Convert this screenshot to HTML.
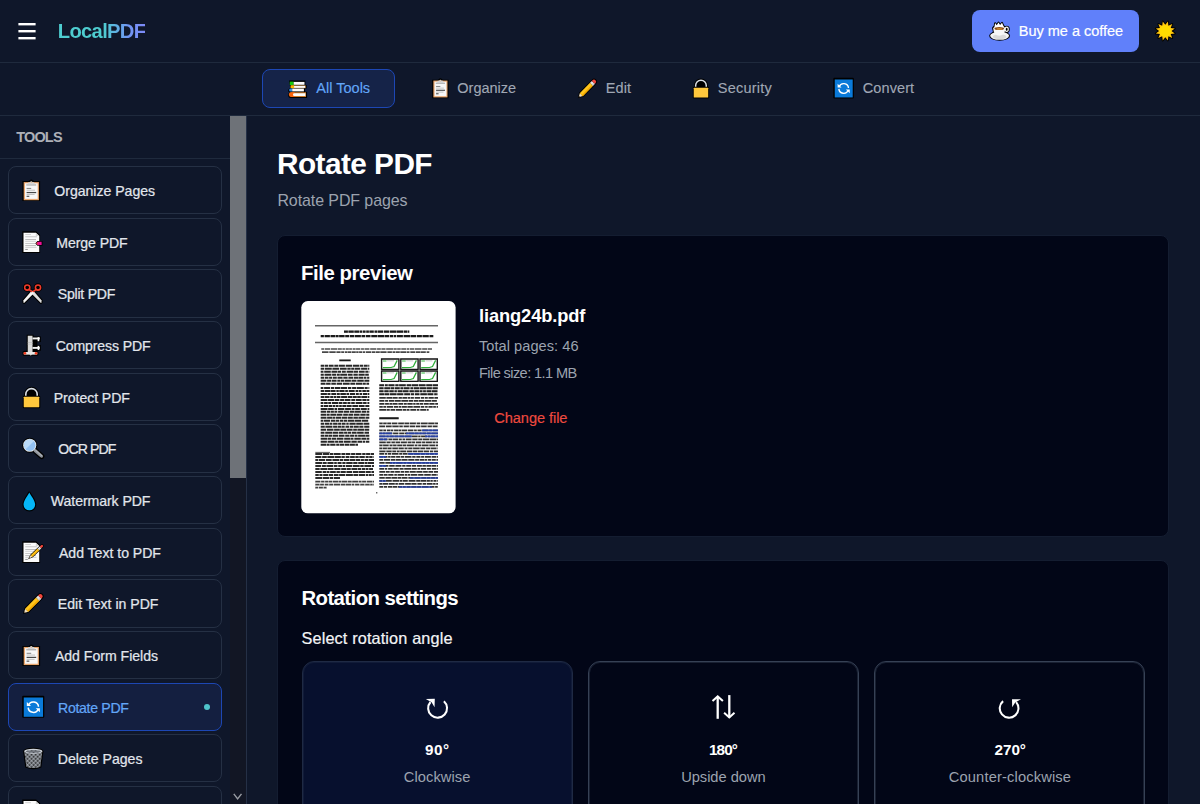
<!DOCTYPE html>
<html lang="en"><head><meta charset="utf-8"><title>LocalPDF - Rotate PDF</title>
<style>
html,body{margin:0;padding:0;}
body{width:1200px;height:804px;overflow:hidden;background:#0f172a;font-family:"Liberation Sans",sans-serif;position:relative;}
#app{position:absolute;left:0;top:0;width:1200px;height:804px;overflow:hidden;background:#0f172a;}
.b{position:absolute;}
.t{position:absolute;white-space:nowrap;font-weight:400;}
svg{position:absolute;left:0;top:0;}
</style></head><body><div id="app">
<div class="b" style="left:0;top:62px;width:1200px;height:1px;background:#1f2a3d"></div>
<div class="b" style="left:0;top:115px;width:1200px;height:1px;background:#1f2a3d"></div>
<div class="b" style="left:972px;top:10px;width:166.5px;height:42.3px;border-radius:8px;background:#6080fa"></div>
<div class="b" style="left:262px;top:69px;width:133px;height:39px;border-radius:8px;background:#152348;border:1px solid #1d47b4;box-sizing:border-box"></div>
<div class="b" style="left:0;top:158px;width:230px;height:1px;background:#1f2a3d"></div>
<div class="b" style="left:7.6px;top:166.00px;width:214.2px;height:48.35px;border-radius:8px;box-sizing:border-box;border:1px solid #253044;"></div>
<div class="b" style="left:7.6px;top:217.65px;width:214.2px;height:48.35px;border-radius:8px;box-sizing:border-box;border:1px solid #253044;"></div>
<div class="b" style="left:7.6px;top:269.30px;width:214.2px;height:48.35px;border-radius:8px;box-sizing:border-box;border:1px solid #253044;"></div>
<div class="b" style="left:7.6px;top:320.95px;width:214.2px;height:48.35px;border-radius:8px;box-sizing:border-box;border:1px solid #253044;"></div>
<div class="b" style="left:7.6px;top:372.60px;width:214.2px;height:48.35px;border-radius:8px;box-sizing:border-box;border:1px solid #253044;"></div>
<div class="b" style="left:7.6px;top:424.25px;width:214.2px;height:48.35px;border-radius:8px;box-sizing:border-box;border:1px solid #253044;"></div>
<div class="b" style="left:7.6px;top:475.90px;width:214.2px;height:48.35px;border-radius:8px;box-sizing:border-box;border:1px solid #253044;"></div>
<div class="b" style="left:7.6px;top:527.55px;width:214.2px;height:48.35px;border-radius:8px;box-sizing:border-box;border:1px solid #253044;"></div>
<div class="b" style="left:7.6px;top:579.20px;width:214.2px;height:48.35px;border-radius:8px;box-sizing:border-box;border:1px solid #253044;"></div>
<div class="b" style="left:7.6px;top:630.85px;width:214.2px;height:48.35px;border-radius:8px;box-sizing:border-box;border:1px solid #253044;"></div>
<div class="b" style="left:7.6px;top:682.50px;width:214.2px;height:48.35px;border-radius:8px;box-sizing:border-box;background:#141f40;border:1px solid #1d47b4;"></div>
<div class="b" style="left:7.6px;top:734.15px;width:214.2px;height:48.35px;border-radius:8px;box-sizing:border-box;border:1px solid #253044;"></div>
<div class="b" style="left:7.6px;top:785.80px;width:214.2px;height:48.35px;border-radius:8px;box-sizing:border-box;border:1px solid #253044;"></div>
<div class="b" style="left:203.8px;top:703.8px;width:6.2px;height:6.2px;border-radius:50%;background:#4fc3cb"></div>
<div class="b" style="left:230px;top:116px;width:16px;height:688px;background:#121624"></div>
<div class="b" style="left:230px;top:116px;width:16px;height:362px;background:#6e7278"></div>
<div class="b" style="left:246px;top:116px;width:1px;height:688px;background:#253046"></div>
<div class="b" style="left:277px;top:235px;width:892px;height:302px;border-radius:8px;background:#020617;border:1px solid #141d31;box-sizing:border-box"></div>
<div class="b" style="left:277px;top:560px;width:892px;height:300px;border-radius:8px;background:#020617;border:1px solid #141d31;box-sizing:border-box"></div>
<div class="b" style="left:301.5px;top:661px;width:271px;height:200px;border-radius:12px;background:#07102e;border:1px solid #1f2a44;box-shadow:inset 0 0 0 1px rgba(31,42,68,0.45);box-sizing:border-box"></div>
<div class="b" style="left:588px;top:661px;width:271px;height:200px;border-radius:12px;background:#020617;border:1px solid #364155;box-shadow:inset 0 0 0 1px rgba(54,65,85,0.45);box-sizing:border-box"></div>
<div class="b" style="left:874.3px;top:661px;width:271px;height:200px;border-radius:12px;background:#020617;border:1px solid #364155;box-shadow:inset 0 0 0 1px rgba(54,65,85,0.45);box-sizing:border-box"></div>
<svg width="1200" height="804" viewBox="0 0 1200 804">
<defs><filter id="bl" x="-5%" y="-5%" width="110%" height="110%"><feGaussianBlur stdDeviation="0.35"/></filter></defs>
<rect x="301.3" y="301" width="154.3" height="212.3" rx="6.5" fill="#fff"/>
<g filter="url(#bl)">
<path d="M315,325h123v1.5h-123zM315,341.7h123v1.5h-123z" fill="#666"/>
<path d="M315.3,451.9h14.7v0.8h-14.7z" fill="#333"/>
<path d="M344.0,330.50h3.9v2.2h-3.9zM348.4,330.50h5.4v2.2h-5.4zM354.3,330.50h4.9v2.2h-4.9zM359.7,330.50h2.7v2.2h-2.7zM363.0,330.50h2.6v2.2h-2.6zM366.2,330.50h2.7v2.2h-2.7zM369.4,330.50h4.4v2.2h-4.4zM374.5,330.50h3.0v2.2h-3.0zM378.0,330.50h5.3v2.2h-5.3zM384.0,330.50h5.1v2.2h-5.1zM389.7,330.50h6.9v2.2h-6.9zM397.0,330.50h6.3v2.2h-6.3zM403.9,330.50h3.1v2.2h-3.1zM407.5,330.50h1.8v2.2h-1.8zM320.7,335.00h3.2v2.2h-3.2zM324.6,335.00h5.3v2.2h-5.3zM330.5,335.00h4.9v2.2h-4.9zM335.9,335.00h2.7v2.2h-2.7zM339.1,335.00h5.5v2.2h-5.5zM345.2,335.00h3.8v2.2h-3.8zM349.7,335.00h4.5v2.2h-4.5zM354.8,335.00h6.1v2.2h-6.1zM361.5,335.00h3.5v2.2h-3.5zM365.7,335.00h4.8v2.2h-4.8zM371.3,335.00h5.8v2.2h-5.8zM377.6,335.00h6.9v2.2h-6.9zM385.0,335.00h4.3v2.2h-4.3zM390.0,335.00h3.1v2.2h-3.1zM393.7,335.00h2.6v2.2h-2.6zM397.0,335.00h5.9v2.2h-5.9zM403.6,335.00h6.4v2.2h-6.4zM410.5,335.00h5.6v2.2h-5.6zM416.8,335.00h5.1v2.2h-5.1zM422.5,335.00h6.3v2.2h-6.3zM429.5,335.00h3.8v2.2h-3.8zM339.3,359.45h11.4v1.9h-11.4zM379.3,417.30h19.4v2.0h-19.4z" fill="#0a0a0a" opacity="0.95"/>
<path d="M321.3,348.15h2.7v1.7h-2.7zM324.7,348.15h5.4v1.7h-5.4zM330.8,348.15h6.2v1.7h-6.2zM337.6,348.15h4.2v1.7h-4.2zM342.4,348.15h2.5v1.7h-2.5zM345.6,348.15h3.2v1.7h-3.2zM349.2,348.15h2.7v1.7h-2.7zM352.6,348.15h3.0v1.7h-3.0zM356.1,348.15h4.2v1.7h-4.2zM361.1,348.15h2.8v1.7h-2.8zM364.5,348.15h4.9v1.7h-4.9zM370.2,348.15h6.2v1.7h-6.2zM377.1,348.15h3.7v1.7h-3.7zM381.4,348.15h4.1v1.7h-4.1zM386.2,348.15h6.8v1.7h-6.8zM393.5,348.15h3.2v1.7h-3.2zM397.2,348.15h3.5v1.7h-3.5zM401.3,348.15h5.1v1.7h-5.1zM407.0,348.15h2.4v1.7h-2.4zM410.0,348.15h4.1v1.7h-4.1zM414.7,348.15h6.8v1.7h-6.8zM422.2,348.15h4.8v1.7h-4.8zM427.6,348.15h4.4v1.7h-4.4zM322.0,351.25h6.5v1.7h-6.5zM329.3,351.25h6.4v1.7h-6.4zM336.4,351.25h4.2v1.7h-4.2zM341.2,351.25h2.9v1.7h-2.9zM344.8,351.25h2.7v1.7h-2.7zM347.9,351.25h3.4v1.7h-3.4zM351.8,351.25h4.0v1.7h-4.0zM356.2,351.25h2.4v1.7h-2.4zM359.1,351.25h2.9v1.7h-2.9zM362.6,351.25h2.5v1.7h-2.5zM365.8,351.25h5.2v1.7h-5.2zM371.6,351.25h3.6v1.7h-3.6zM375.7,351.25h4.1v1.7h-4.1zM380.3,351.25h6.3v1.7h-6.3zM387.4,351.25h4.5v1.7h-4.5zM392.5,351.25h2.8v1.7h-2.8zM395.8,351.25h4.0v1.7h-4.0zM400.3,351.25h6.2v1.7h-6.2zM407.0,351.25h2.5v1.7h-2.5zM410.3,351.25h4.8v1.7h-4.8zM415.7,351.25h4.9v1.7h-4.9zM421.0,351.25h4.8v1.7h-4.8zM426.6,351.25h2.7v1.7h-2.7z" fill="#1c1c1c" opacity="0.8"/>
<path d="M320.7,364.75h3.6v1.9h-3.6zM324.9,364.75h3.2v1.9h-3.2zM328.8,364.75h4.8v1.9h-4.8zM334.3,364.75h3.9v1.9h-3.9zM338.8,364.75h6.1v1.9h-6.1zM345.7,364.75h6.3v1.9h-6.3zM352.8,364.75h6.2v1.9h-6.2zM359.6,364.75h3.4v1.9h-3.4zM363.7,364.75h4.0v1.9h-4.0zM368.2,364.75h1.1v1.9h-1.1zM320.7,367.75h3.6v1.9h-3.6zM325.0,367.75h6.8v1.9h-6.8zM332.4,367.75h6.7v1.9h-6.7zM339.9,367.75h6.8v1.9h-6.8zM347.3,367.75h3.4v1.9h-3.4zM351.2,367.75h3.3v1.9h-3.3zM355.0,367.75h5.3v1.9h-5.3zM361.1,367.75h6.3v1.9h-6.3zM368.0,367.75h1.3v1.9h-1.3zM320.7,370.75h2.8v1.9h-2.8zM324.2,370.75h6.6v1.9h-6.6zM331.5,370.75h5.9v1.9h-5.9zM337.9,370.75h3.2v1.9h-3.2zM341.9,370.75h3.9v1.9h-3.9zM346.6,370.75h6.9v1.9h-6.9zM354.0,370.75h4.2v1.9h-4.2zM359.0,370.75h5.7v1.9h-5.7zM365.3,370.75h3.0v1.9h-3.0zM368.8,370.75h0.5v1.9h-0.5zM320.7,373.75h3.1v1.9h-3.1zM324.5,373.75h6.9v1.9h-6.9zM332.1,373.75h4.0v1.9h-4.0zM336.8,373.75h3.0v1.9h-3.0zM340.2,373.75h6.9v1.9h-6.9zM347.8,373.75h4.8v1.9h-4.8zM353.4,373.75h4.4v1.9h-4.4zM358.5,373.75h6.2v1.9h-6.2zM365.2,373.75h3.6v1.9h-3.6zM320.7,376.75h3.5v1.9h-3.5zM324.9,376.75h3.6v1.9h-3.6zM329.1,376.75h3.0v1.9h-3.0zM332.8,376.75h4.0v1.9h-4.0zM337.5,376.75h5.1v1.9h-5.1zM343.3,376.75h4.3v1.9h-4.3zM348.4,376.75h4.7v1.9h-4.7zM353.8,376.75h4.8v1.9h-4.8zM359.0,376.75h4.4v1.9h-4.4zM364.0,376.75h2.4v1.9h-2.4zM367.1,376.75h2.2v1.9h-2.2zM320.7,379.75h5.7v1.9h-5.7zM327.1,379.75h3.9v1.9h-3.9zM331.6,379.75h5.0v1.9h-5.0zM337.3,379.75h2.9v1.9h-2.9zM340.8,379.75h3.5v1.9h-3.5zM344.9,379.75h6.0v1.9h-6.0zM351.5,379.75h5.0v1.9h-5.0zM357.2,379.75h6.6v1.9h-6.6zM364.4,379.75h4.9v1.9h-4.9zM320.7,382.75h4.8v1.9h-4.8zM326.1,382.75h4.5v1.9h-4.5zM331.3,382.75h4.6v1.9h-4.6zM336.6,382.75h5.6v1.9h-5.6zM343.0,382.75h6.7v1.9h-6.7zM350.3,382.75h5.0v1.9h-5.0zM356.0,382.75h6.3v1.9h-6.3zM362.8,382.75h3.0v1.9h-3.0zM366.4,382.75h2.7v1.9h-2.7zM320.7,387.05h2.7v1.9h-2.7zM324.1,387.05h6.0v1.9h-6.0zM330.9,387.05h3.1v1.9h-3.1zM334.7,387.05h5.4v1.9h-5.4zM340.6,387.05h6.5v1.9h-6.5zM347.9,387.05h3.4v1.9h-3.4zM352.1,387.05h4.2v1.9h-4.2zM356.9,387.05h7.0v1.9h-7.0zM364.6,387.05h3.1v1.9h-3.1zM368.4,387.05h0.9v1.9h-0.9zM320.7,390.05h3.3v1.9h-3.3zM324.6,390.05h5.7v1.9h-5.7zM330.7,390.05h4.9v1.9h-4.9zM336.3,390.05h2.5v1.9h-2.5zM339.3,390.05h5.3v1.9h-5.3zM345.2,390.05h2.7v1.9h-2.7zM348.7,390.05h6.0v1.9h-6.0zM355.5,390.05h2.9v1.9h-2.9zM359.0,390.05h2.6v1.9h-2.6zM362.3,390.05h3.6v1.9h-3.6zM366.4,390.05h2.9v1.9h-2.9zM320.7,393.05h6.2v1.9h-6.2zM327.4,393.05h3.1v1.9h-3.1zM331.3,393.05h5.0v1.9h-5.0zM337.0,393.05h2.8v1.9h-2.8zM340.3,393.05h5.6v1.9h-5.6zM346.4,393.05h2.7v1.9h-2.7zM349.9,393.05h5.3v1.9h-5.3zM356.0,393.05h2.8v1.9h-2.8zM359.5,393.05h2.7v1.9h-2.7zM363.0,393.05h4.5v1.9h-4.5zM368.0,393.05h1.3v1.9h-1.3zM320.7,396.05h3.6v1.9h-3.6zM324.8,396.05h4.8v1.9h-4.8zM330.2,396.05h2.9v1.9h-2.9zM333.6,396.05h2.6v1.9h-2.6zM336.7,396.05h3.8v1.9h-3.8zM341.1,396.05h5.9v1.9h-5.9zM347.6,396.05h4.7v1.9h-4.7zM352.8,396.05h4.0v1.9h-4.0zM357.2,396.05h3.6v1.9h-3.6zM361.3,396.05h5.8v1.9h-5.8zM367.7,396.05h1.6v1.9h-1.6zM320.7,399.05h6.7v1.9h-6.7zM327.9,399.05h6.2v1.9h-6.2zM334.7,399.05h4.7v1.9h-4.7zM340.1,399.05h4.2v1.9h-4.2zM344.9,399.05h5.6v1.9h-5.6zM351.3,399.05h4.0v1.9h-4.0zM356.0,399.05h5.7v1.9h-5.7zM362.3,399.05h4.3v1.9h-4.3zM367.1,399.05h2.2v1.9h-2.2zM320.7,402.05h2.7v1.9h-2.7zM324.1,402.05h3.6v1.9h-3.6zM328.2,402.05h2.8v1.9h-2.8zM331.8,402.05h6.4v1.9h-6.4zM338.8,402.05h3.7v1.9h-3.7zM343.1,402.05h3.7v1.9h-3.7zM347.4,402.05h3.1v1.9h-3.1zM351.2,402.05h3.6v1.9h-3.6zM355.6,402.05h6.9v1.9h-6.9zM363.1,402.05h3.5v1.9h-3.5zM367.4,402.05h1.9v1.9h-1.9zM320.7,405.05h2.4v1.9h-2.4zM323.7,405.05h4.6v1.9h-4.6zM328.9,405.05h3.3v1.9h-3.3zM332.8,405.05h2.4v1.9h-2.4zM335.8,405.05h2.8v1.9h-2.8zM339.2,405.05h2.6v1.9h-2.6zM342.3,405.05h3.8v1.9h-3.8zM346.6,405.05h5.1v1.9h-5.1zM352.3,405.05h5.9v1.9h-5.9zM358.9,405.05h5.7v1.9h-5.7zM365.3,405.05h4.0v1.9h-4.0zM320.7,408.05h6.9v1.9h-6.9zM328.1,408.05h5.7v1.9h-5.7zM334.5,408.05h2.6v1.9h-2.6zM337.9,408.05h6.5v1.9h-6.5zM345.1,408.05h5.8v1.9h-5.8zM351.6,408.05h3.0v1.9h-3.0zM355.2,408.05h4.7v1.9h-4.7zM360.7,408.05h6.1v1.9h-6.1zM367.5,408.05h1.8v1.9h-1.8zM320.7,410.75h5.5v1.9h-5.5zM326.9,410.75h3.5v1.9h-3.5zM330.9,410.75h3.0v1.9h-3.0zM334.4,410.75h2.9v1.9h-2.9zM338.1,410.75h5.0v1.9h-5.0zM343.7,410.75h5.3v1.9h-5.3zM349.7,410.75h4.7v1.9h-4.7zM354.8,410.75h6.1v1.9h-6.1zM361.6,410.75h4.7v1.9h-4.7zM366.9,410.75h2.4v1.9h-2.4zM320.7,413.75h5.8v1.9h-5.8zM327.0,413.75h2.7v1.9h-2.7zM330.3,413.75h5.8v1.9h-5.8zM336.6,413.75h5.8v1.9h-5.8zM343.2,413.75h4.7v1.9h-4.7zM348.4,413.75h4.6v1.9h-4.6zM353.7,413.75h5.9v1.9h-5.9zM360.3,413.75h5.4v1.9h-5.4zM366.2,413.75h3.1v1.9h-3.1zM320.7,416.75h5.8v1.9h-5.8zM327.1,416.75h5.0v1.9h-5.0zM332.5,416.75h2.7v1.9h-2.7zM335.8,416.75h5.5v1.9h-5.5zM341.9,416.75h5.5v1.9h-5.5zM348.0,416.75h4.8v1.9h-4.8zM353.4,416.75h4.5v1.9h-4.5zM358.4,416.75h6.5v1.9h-6.5zM365.5,416.75h3.8v1.9h-3.8zM320.7,419.75h2.5v1.9h-2.5zM323.8,419.75h6.2v1.9h-6.2zM330.8,419.75h4.5v1.9h-4.5zM335.8,419.75h3.4v1.9h-3.4zM339.9,419.75h3.4v1.9h-3.4zM343.9,419.75h3.1v1.9h-3.1zM347.6,419.75h6.8v1.9h-6.8zM354.9,419.75h6.2v1.9h-6.2zM361.7,419.75h6.5v1.9h-6.5zM320.7,422.75h3.5v1.9h-3.5zM324.9,422.75h4.6v1.9h-4.6zM330.0,422.75h2.4v1.9h-2.4zM333.1,422.75h4.5v1.9h-4.5zM338.1,422.75h3.0v1.9h-3.0zM341.7,422.75h3.9v1.9h-3.9zM346.3,422.75h2.4v1.9h-2.4zM349.4,422.75h6.3v1.9h-6.3zM356.2,422.75h6.7v1.9h-6.7zM363.5,422.75h5.8v1.9h-5.8zM320.7,425.75h4.1v1.9h-4.1zM325.4,425.75h7.0v1.9h-7.0zM333.1,425.75h4.1v1.9h-4.1zM337.7,425.75h3.7v1.9h-3.7zM341.8,425.75h2.9v1.9h-2.9zM345.5,425.75h3.7v1.9h-3.7zM349.9,425.75h3.5v1.9h-3.5zM354.0,425.75h4.8v1.9h-4.8zM359.3,425.75h4.1v1.9h-4.1zM364.2,425.75h5.1v1.9h-5.1zM320.7,428.75h5.3v1.9h-5.3zM326.8,428.75h6.7v1.9h-6.7zM334.1,428.75h5.7v1.9h-5.7zM340.3,428.75h5.8v1.9h-5.8zM346.7,428.75h5.9v1.9h-5.9zM353.2,428.75h3.7v1.9h-3.7zM357.4,428.75h6.7v1.9h-6.7zM364.6,428.75h4.6v1.9h-4.6zM320.7,431.75h3.8v1.9h-3.8zM325.2,431.75h6.9v1.9h-6.9zM332.6,431.75h5.4v1.9h-5.4zM338.6,431.75h5.0v1.9h-5.0zM344.1,431.75h3.2v1.9h-3.2zM347.8,431.75h3.4v1.9h-3.4zM351.9,431.75h4.7v1.9h-4.7zM357.1,431.75h6.6v1.9h-6.6zM364.5,431.75h4.5v1.9h-4.5zM320.7,434.75h3.3v1.9h-3.3zM324.5,434.75h4.0v1.9h-4.0zM328.9,434.75h3.5v1.9h-3.5zM333.0,434.75h5.0v1.9h-5.0zM338.7,434.75h5.8v1.9h-5.8zM345.2,434.75h4.3v1.9h-4.3zM350.1,434.75h4.1v1.9h-4.1zM354.8,434.75h2.7v1.9h-2.7zM358.1,434.75h6.9v1.9h-6.9zM365.4,434.75h3.9v1.9h-3.9zM320.7,437.75h6.4v1.9h-6.4zM327.6,437.75h3.6v1.9h-3.6zM331.8,437.75h4.2v1.9h-4.2zM336.6,437.75h6.8v1.9h-6.8zM344.2,437.75h6.4v1.9h-6.4zM351.0,437.75h2.5v1.9h-2.5zM354.3,437.75h6.5v1.9h-6.5zM361.4,437.75h5.1v1.9h-5.1zM367.0,437.75h2.3v1.9h-2.3zM320.7,440.75h6.2v1.9h-6.2zM327.6,440.75h6.9v1.9h-6.9zM335.1,440.75h2.9v1.9h-2.9zM338.5,440.75h4.8v1.9h-4.8zM344.0,440.75h6.7v1.9h-6.7zM351.4,440.75h5.4v1.9h-5.4zM357.5,440.75h4.5v1.9h-4.5zM362.6,440.75h2.6v1.9h-2.6zM365.9,440.75h3.4v1.9h-3.4zM320.7,443.75h5.4v1.9h-5.4zM326.6,443.75h3.0v1.9h-3.0zM330.2,443.75h5.3v1.9h-5.3zM336.2,443.75h2.9v1.9h-2.9zM339.6,443.75h4.8v1.9h-4.8zM345.0,443.75h4.2v1.9h-4.2zM349.7,443.75h5.2v1.9h-5.2zM355.4,443.75h2.6v1.9h-2.6z" fill="#111" opacity="0.9"/>
<path d="M315.3,453.00h6.8v2.0h-6.8zM322.8,453.00h6.5v2.0h-6.5zM329.9,453.00h3.5v2.0h-3.5zM333.9,453.00h6.8v2.0h-6.8zM341.4,453.00h3.8v2.0h-3.8zM345.7,453.00h4.7v2.0h-4.7zM351.1,453.00h4.3v2.0h-4.3zM355.9,453.00h5.5v2.0h-5.5zM362.2,453.00h3.4v2.0h-3.4zM366.1,453.00h4.0v2.0h-4.0zM370.6,453.00h3.4v2.0h-3.4zM315.3,456.00h6.1v2.0h-6.1zM322.1,456.00h4.7v2.0h-4.7zM327.3,456.00h6.9v2.0h-6.9zM334.7,456.00h6.2v2.0h-6.2zM341.4,456.00h3.4v2.0h-3.4zM345.6,456.00h3.8v2.0h-3.8zM350.1,456.00h4.7v2.0h-4.7zM355.3,456.00h3.4v2.0h-3.4zM359.3,456.00h5.5v2.0h-5.5zM365.6,456.00h3.1v2.0h-3.1zM369.2,456.00h3.4v2.0h-3.4zM373.4,456.00h0.6v2.0h-0.6zM315.3,459.00h2.7v2.0h-2.7zM318.6,459.00h6.5v2.0h-6.5zM325.9,459.00h5.8v2.0h-5.8zM332.4,459.00h6.7v2.0h-6.7zM339.7,459.00h3.3v2.0h-3.3zM343.7,459.00h5.8v2.0h-5.8zM350.0,459.00h5.5v2.0h-5.5zM356.0,459.00h4.1v2.0h-4.1zM360.7,459.00h3.2v2.0h-3.2zM364.4,459.00h3.7v2.0h-3.7zM368.6,459.00h5.4v2.0h-5.4zM315.3,462.00h6.8v2.0h-6.8zM322.7,462.00h4.0v2.0h-4.0zM327.4,462.00h6.2v2.0h-6.2zM334.2,462.00h2.6v2.0h-2.6zM337.5,462.00h4.1v2.0h-4.1zM342.3,462.00h3.3v2.0h-3.3zM346.2,462.00h6.5v2.0h-6.5zM353.2,462.00h4.3v2.0h-4.3zM358.2,462.00h5.9v2.0h-5.9zM364.6,462.00h2.6v2.0h-2.6zM367.6,462.00h6.4v2.0h-6.4zM315.3,465.00h5.8v2.0h-5.8zM321.9,465.00h4.0v2.0h-4.0zM326.4,465.00h6.8v2.0h-6.8zM333.9,465.00h3.6v2.0h-3.6zM338.2,465.00h3.9v2.0h-3.9zM342.6,465.00h2.4v2.0h-2.4zM345.7,465.00h6.6v2.0h-6.6zM353.0,465.00h6.7v2.0h-6.7zM360.2,465.00h3.5v2.0h-3.5zM364.3,465.00h6.8v2.0h-6.8zM371.9,465.00h2.1v2.0h-2.1zM315.3,468.00h4.4v2.0h-4.4zM320.3,468.00h6.7v2.0h-6.7zM327.5,468.00h6.1v2.0h-6.1zM334.3,468.00h6.2v2.0h-6.2zM341.2,468.00h5.2v2.0h-5.2zM346.9,468.00h3.9v2.0h-3.9zM351.4,468.00h6.0v2.0h-6.0zM357.9,468.00h3.3v2.0h-3.3zM361.9,468.00h3.5v2.0h-3.5zM365.9,468.00h2.6v2.0h-2.6zM369.1,468.00h3.9v2.0h-3.9zM315.3,471.00h6.5v2.0h-6.5zM322.6,471.00h3.6v2.0h-3.6zM326.7,471.00h2.8v2.0h-2.8zM330.1,471.00h5.7v2.0h-5.7zM336.4,471.00h3.5v2.0h-3.5zM340.5,471.00h5.3v2.0h-5.3zM346.4,471.00h5.8v2.0h-5.8zM353.0,471.00h5.5v2.0h-5.5zM358.9,471.00h6.3v2.0h-6.3zM365.8,471.00h5.0v2.0h-5.0zM371.4,471.00h2.6v2.0h-2.6zM315.3,474.00h3.5v2.0h-3.5zM319.4,474.00h3.1v2.0h-3.1zM323.2,474.00h5.1v2.0h-5.1zM328.9,474.00h4.2v2.0h-4.2zM333.9,474.00h4.7v2.0h-4.7zM339.1,474.00h6.1v2.0h-6.1zM345.9,474.00h7.0v2.0h-7.0zM353.4,474.00h4.6v2.0h-4.6zM358.7,474.00h6.3v2.0h-6.3zM365.7,474.00h2.6v2.0h-2.6zM368.9,474.00h2.9v2.0h-2.9zM372.3,474.00h1.7v2.0h-1.7zM315.3,477.00h6.7v2.0h-6.7zM322.6,477.00h6.4v2.0h-6.4zM329.6,477.00h3.6v2.0h-3.6zM333.9,477.00h6.1v2.0h-6.1z" fill="#111" opacity="0.88"/>
<path d="M315.3,480.70h5.1v1.8h-5.1zM321.1,480.70h3.4v1.8h-3.4zM325.1,480.70h3.1v1.8h-3.1zM328.7,480.70h3.6v1.8h-3.6zM332.9,480.70h5.4v1.8h-5.4zM338.8,480.70h2.5v1.8h-2.5zM341.8,480.70h5.5v1.8h-5.5zM347.9,480.70h3.8v1.8h-3.8zM352.2,480.70h6.1v1.8h-6.1zM358.9,480.70h2.7v1.8h-2.7zM362.1,480.70h4.2v1.8h-4.2zM367.0,480.70h5.3v1.8h-5.3zM372.8,480.70h1.2v1.8h-1.2zM315.3,483.70h4.3v1.8h-4.3zM320.1,483.70h3.8v1.8h-3.8zM324.7,483.70h3.8v1.8h-3.8zM329.2,483.70h4.0v1.8h-4.0zM333.9,483.70h6.4v1.8h-6.4zM341.0,483.70h4.1v1.8h-4.1zM345.6,483.70h5.7v1.8h-5.7zM351.9,483.70h2.4v1.8h-2.4zM355.1,483.70h4.3v1.8h-4.3zM360.2,483.70h4.3v1.8h-4.3zM365.2,483.70h4.5v1.8h-4.5zM370.2,483.70h2.5v1.8h-2.5zM373.3,483.70h0.7v1.8h-0.7zM315.3,486.70h2.8v1.8h-2.8zM318.8,486.70h4.1v1.8h-4.1zM323.5,486.70h3.1v1.8h-3.1z" fill="#111" opacity="0.8"/>
<path d="M379.3,384.35h4.8v1.9h-4.8zM384.9,384.35h2.9v1.9h-2.9zM388.4,384.35h6.1v1.9h-6.1zM395.3,384.35h3.3v1.9h-3.3zM399.1,384.35h6.7v1.9h-6.7zM406.6,384.35h4.6v1.9h-4.6zM411.7,384.35h6.7v1.9h-6.7zM419.0,384.35h6.6v1.9h-6.6zM426.2,384.35h6.2v1.9h-6.2zM432.9,384.35h5.1v1.9h-5.1zM379.3,387.35h4.3v1.9h-4.3zM384.3,387.35h6.2v1.9h-6.2zM391.0,387.35h3.4v1.9h-3.4zM395.0,387.35h4.8v1.9h-4.8zM400.4,387.35h3.0v1.9h-3.0zM403.9,387.35h5.7v1.9h-5.7zM410.4,387.35h2.6v1.9h-2.6zM413.6,387.35h5.9v1.9h-5.9zM420.0,387.35h6.3v1.9h-6.3zM426.7,387.35h5.2v1.9h-5.2zM432.5,387.35h5.3v1.9h-5.3zM379.3,390.35h4.3v1.9h-4.3zM384.3,390.35h4.4v1.9h-4.4zM389.3,390.35h4.5v1.9h-4.5zM394.4,390.35h2.5v1.9h-2.5zM397.6,390.35h4.7v1.9h-4.7zM402.7,390.35h5.9v1.9h-5.9zM409.4,390.35h4.5v1.9h-4.5zM414.4,390.35h4.6v1.9h-4.6zM419.5,390.35h3.0v1.9h-3.0zM423.1,390.35h2.8v1.9h-2.8zM426.5,390.35h4.7v1.9h-4.7zM431.7,390.35h5.3v1.9h-5.3zM437.5,390.35h0.5v1.9h-0.5zM379.3,393.35h4.8v1.9h-4.8zM384.5,393.35h4.7v1.9h-4.7zM389.8,393.35h6.8v1.9h-6.8zM397.1,393.35h6.3v1.9h-6.3zM404.2,393.35h5.8v1.9h-5.8zM410.7,393.35h3.3v1.9h-3.3zM414.8,393.35h4.7v1.9h-4.7zM420.3,393.35h6.6v1.9h-6.6zM427.4,393.35h6.0v1.9h-6.0zM434.2,393.35h2.7v1.9h-2.7zM437.5,393.35h0.5v1.9h-0.5z" fill="#0a0a0a" opacity="0.92"/>
<path d="M379.3,397.12h6.5v1.75h-6.5zM386.4,397.12h6.2v1.75h-6.2zM393.0,397.12h4.7v1.75h-4.7zM398.5,397.12h3.4v1.75h-3.4zM402.4,397.12h4.7v1.75h-4.7zM407.7,397.12h2.6v1.75h-2.6zM410.8,397.12h3.1v1.75h-3.1zM414.7,397.12h5.5v1.75h-5.5zM421.0,397.12h3.2v1.75h-3.2zM424.9,397.12h2.9v1.75h-2.9zM428.5,397.12h5.3v1.75h-5.3zM434.4,397.12h3.6v1.75h-3.6zM379.3,400.12h5.1v1.75h-5.1zM385.1,400.12h2.9v1.75h-2.9zM388.8,400.12h5.3v1.75h-5.3zM394.7,400.12h6.1v1.75h-6.1zM401.3,400.12h7.0v1.75h-7.0zM408.9,400.12h4.1v1.75h-4.1zM413.7,400.12h4.4v1.75h-4.4zM418.6,400.12h5.8v1.75h-5.8zM424.9,400.12h6.2v1.75h-6.2zM431.6,400.12h5.3v1.75h-5.3zM379.3,403.12h5.1v1.75h-5.1zM385.1,403.12h3.8v1.75h-3.8zM389.4,403.12h2.6v1.75h-2.6zM392.4,403.12h5.2v1.75h-5.2zM398.3,403.12h4.8v1.75h-4.8zM403.8,403.12h3.0v1.75h-3.0zM407.3,403.12h5.4v1.75h-5.4zM413.2,403.12h2.4v1.75h-2.4zM416.2,403.12h2.9v1.75h-2.9zM419.6,403.12h3.4v1.75h-3.4zM423.7,403.12h5.1v1.75h-5.1zM429.3,403.12h5.3v1.75h-5.3zM435.2,403.12h2.8v1.75h-2.8zM379.3,406.12h3.5v1.75h-3.5zM383.3,406.12h2.8v1.75h-2.8zM386.8,406.12h6.4v1.75h-6.4zM394.0,406.12h4.2v1.75h-4.2zM398.8,406.12h2.5v1.75h-2.5zM401.9,406.12h5.0v1.75h-5.0zM407.4,406.12h5.4v1.75h-5.4zM413.4,406.12h6.7v1.75h-6.7zM420.8,406.12h3.5v1.75h-3.5zM425.1,406.12h2.6v1.75h-2.6zM428.4,406.12h4.3v1.75h-4.3zM433.2,406.12h2.7v1.75h-2.7zM436.6,406.12h1.4v1.75h-1.4zM379.3,409.12h6.7v1.75h-6.7zM386.5,409.12h3.3v1.75h-3.3zM390.5,409.12h4.7v1.75h-4.7zM395.9,409.12h6.1v1.75h-6.1zM402.6,409.12h3.8v1.75h-3.8zM406.9,409.12h2.6v1.75h-2.6zM410.3,409.12h6.0v1.75h-6.0zM417.0,409.12h2.4v1.75h-2.4zM420.2,409.12h5.8v1.75h-5.8zM426.6,409.12h2.1v1.75h-2.1zM379.3,422.43h3.4v1.75h-3.4zM383.2,422.43h3.5v1.75h-3.5zM387.2,422.43h3.9v1.75h-3.9zM391.8,422.43h5.6v1.75h-5.6zM398.2,422.43h5.7v1.75h-5.7zM404.4,422.43h4.9v1.75h-4.9zM409.9,422.43h6.0v1.75h-6.0zM416.6,422.43h3.6v1.75h-3.6zM420.9,422.43h6.8v1.75h-6.8zM428.2,422.43h6.4v1.75h-6.4zM435.1,422.43h2.9v1.75h-2.9zM379.3,425.43h5.8v1.75h-5.8zM385.9,425.43h5.8v1.75h-5.8zM392.3,425.43h6.4v1.75h-6.4zM399.3,425.43h3.5v1.75h-3.5zM403.6,425.43h5.3v1.75h-5.3zM409.6,425.43h5.5v1.75h-5.5zM415.8,425.43h4.6v1.75h-4.6zM421.1,425.43h5.6v1.75h-5.6zM427.5,425.43h4.4v1.75h-4.4zM432.6,425.43h5.0v1.75h-5.0zM379.3,429.43h3.4v1.75h-3.4zM383.3,429.43h2.8v1.75h-2.8zM386.9,429.43h3.1v1.75h-3.1zM390.4,429.43h2.9v1.75h-2.9zM394.1,429.43h4.0v1.75h-4.0zM398.5,429.43h2.5v1.75h-2.5zM401.5,429.43h5.6v1.75h-5.6zM407.8,429.43h5.6v1.75h-5.6zM414.1,429.43h2.7v1.75h-2.7zM417.5,429.43h4.1v1.75h-4.1zM422.3,429.43h6.2v1.75h-6.2zM429.2,429.43h2.7v1.75h-2.7zM432.7,429.43h5.3v1.75h-5.3zM379.3,432.43h2.9v1.75h-2.9zM382.7,432.43h2.9v1.75h-2.9zM386.1,432.43h6.3v1.75h-6.3zM393.1,432.43h5.3v1.75h-5.3zM399.2,432.43h5.3v1.75h-5.3zM405.0,432.43h2.9v1.75h-2.9zM408.4,432.43h5.9v1.75h-5.9zM414.8,432.43h3.9v1.75h-3.9zM419.3,432.43h2.5v1.75h-2.5zM422.3,432.43h3.7v1.75h-3.7zM426.7,432.43h4.1v1.75h-4.1zM431.3,432.43h6.7v1.75h-6.7zM379.3,435.43h6.3v1.75h-6.3zM386.3,435.43h2.5v1.75h-2.5zM389.4,435.43h4.4v1.75h-4.4zM394.5,435.43h4.0v1.75h-4.0zM399.2,435.43h4.9v1.75h-4.9zM404.6,435.43h6.4v1.75h-6.4zM411.5,435.43h6.2v1.75h-6.2zM418.2,435.43h2.4v1.75h-2.4zM421.1,435.43h5.9v1.75h-5.9zM427.8,435.43h2.4v1.75h-2.4zM430.8,435.43h4.7v1.75h-4.7zM436.2,435.43h1.8v1.75h-1.8zM379.3,438.43h4.0v1.75h-4.0zM384.0,438.43h3.6v1.75h-3.6zM388.4,438.43h3.7v1.75h-3.7zM392.6,438.43h5.6v1.75h-5.6zM398.9,438.43h2.9v1.75h-2.9zM402.5,438.43h2.8v1.75h-2.8zM406.0,438.43h5.6v1.75h-5.6zM412.3,438.43h5.3v1.75h-5.3zM418.2,438.43h4.2v1.75h-4.2zM423.0,438.43h6.5v1.75h-6.5zM430.0,438.43h6.5v1.75h-6.5zM436.9,438.43h1.1v1.75h-1.1zM379.3,441.43h6.5v1.75h-6.5zM386.5,441.43h4.1v1.75h-4.1zM391.4,441.43h3.5v1.75h-3.5zM395.5,441.43h4.8v1.75h-4.8zM401.0,441.43h5.9v1.75h-5.9zM407.6,441.43h4.0v1.75h-4.0zM412.1,441.43h3.1v1.75h-3.1zM416.0,441.43h5.4v1.75h-5.4zM422.1,441.43h3.2v1.75h-3.2zM425.9,441.43h6.0v1.75h-6.0zM432.5,441.43h3.0v1.75h-3.0zM436.1,441.43h1.9v1.75h-1.9zM379.3,444.43h3.3v1.75h-3.3zM383.1,444.43h5.6v1.75h-5.6zM389.5,444.43h3.1v1.75h-3.1zM393.1,444.43h3.5v1.75h-3.5zM397.2,444.43h4.8v1.75h-4.8zM402.5,444.43h3.9v1.75h-3.9zM407.0,444.43h6.9v1.75h-6.9zM414.6,444.43h2.9v1.75h-2.9zM418.2,444.43h2.9v1.75h-2.9zM421.7,444.43h6.9v1.75h-6.9zM429.3,444.43h5.8v1.75h-5.8zM435.7,444.43h2.3v1.75h-2.3zM379.3,447.43h2.9v1.75h-2.9zM382.7,447.43h4.2v1.75h-4.2zM387.4,447.43h4.2v1.75h-4.2zM392.3,447.43h5.6v1.75h-5.6zM398.5,447.43h5.3v1.75h-5.3zM404.5,447.43h3.1v1.75h-3.1zM408.2,447.43h4.3v1.75h-4.3zM413.1,447.43h6.6v1.75h-6.6zM420.3,447.43h5.0v1.75h-5.0zM426.1,447.43h4.3v1.75h-4.3zM430.9,447.43h5.7v1.75h-5.7zM437.4,447.43h0.6v1.75h-0.6zM379.3,450.43h6.3v1.75h-6.3zM386.3,450.43h5.4v1.75h-5.4zM392.3,450.43h3.8v1.75h-3.8zM396.8,450.43h2.9v1.75h-2.9zM400.2,450.43h6.0v1.75h-6.0zM406.9,450.43h5.3v1.75h-5.3zM412.8,450.43h4.3v1.75h-4.3zM417.7,450.43h5.3v1.75h-5.3zM423.6,450.43h5.5v1.75h-5.5zM429.9,450.43h3.2v1.75h-3.2zM433.8,450.43h4.2v1.75h-4.2zM379.3,453.02h4.7v1.75h-4.7zM384.7,453.02h2.6v1.75h-2.6zM388.0,453.02h3.1v1.75h-3.1zM391.8,453.02h6.7v1.75h-6.7zM399.2,453.02h2.9v1.75h-2.9zM402.7,453.02h4.9v1.75h-4.9zM408.3,453.02h4.8v1.75h-4.8zM413.7,453.02h6.2v1.75h-6.2zM420.6,453.02h4.3v1.75h-4.3zM425.6,453.02h3.4v1.75h-3.4zM429.7,453.02h4.2v1.75h-4.2zM434.6,453.02h3.0v1.75h-3.0zM379.3,456.02h4.0v1.75h-4.0zM383.8,456.02h3.7v1.75h-3.7zM388.1,456.02h2.5v1.75h-2.5zM391.1,456.02h4.3v1.75h-4.3zM396.1,456.02h4.0v1.75h-4.0zM400.7,456.02h3.4v1.75h-3.4zM404.8,456.02h6.7v1.75h-6.7zM412.2,456.02h3.4v1.75h-3.4zM416.3,456.02h4.2v1.75h-4.2zM421.1,456.02h3.0v1.75h-3.0zM424.8,456.02h6.1v1.75h-6.1zM431.6,456.02h4.6v1.75h-4.6zM436.8,456.02h1.2v1.75h-1.2zM379.3,459.02h4.0v1.75h-4.0zM384.0,459.02h6.2v1.75h-6.2zM390.9,459.02h4.6v1.75h-4.6zM396.0,459.02h4.9v1.75h-4.9zM401.4,459.02h6.2v1.75h-6.2zM408.2,459.02h6.3v1.75h-6.3zM415.1,459.02h4.1v1.75h-4.1zM419.8,459.02h4.4v1.75h-4.4zM424.6,459.02h2.4v1.75h-2.4zM427.7,459.02h3.7v1.75h-3.7zM432.0,459.02h3.8v1.75h-3.8zM436.4,459.02h1.6v1.75h-1.6zM379.3,462.02h5.4v1.75h-5.4zM385.3,462.02h6.7v1.75h-6.7zM392.7,462.02h2.7v1.75h-2.7zM396.1,462.02h6.6v1.75h-6.6zM403.4,462.02h3.0v1.75h-3.0zM407.2,462.02h5.3v1.75h-5.3zM413.0,462.02h2.5v1.75h-2.5zM416.2,462.02h5.4v1.75h-5.4zM422.2,462.02h2.9v1.75h-2.9zM425.5,462.02h3.5v1.75h-3.5zM429.7,462.02h4.0v1.75h-4.0zM434.2,462.02h3.8v1.75h-3.8zM379.3,465.02h3.2v1.75h-3.2zM383.2,465.02h5.2v1.75h-5.2zM389.2,465.02h5.5v1.75h-5.5zM395.4,465.02h6.0v1.75h-6.0zM402.2,465.02h3.3v1.75h-3.3zM406.2,465.02h4.8v1.75h-4.8zM411.7,465.02h4.4v1.75h-4.4zM416.9,465.02h5.0v1.75h-5.0zM422.4,465.02h3.5v1.75h-3.5zM426.4,465.02h4.7v1.75h-4.7zM431.5,465.02h4.5v1.75h-4.5zM436.6,465.02h1.4v1.75h-1.4zM379.3,468.02h4.9v1.75h-4.9zM384.9,468.02h2.4v1.75h-2.4zM388.1,468.02h4.6v1.75h-4.6zM393.3,468.02h5.5v1.75h-5.5zM399.5,468.02h4.1v1.75h-4.1zM404.2,468.02h6.8v1.75h-6.8zM411.5,468.02h5.3v1.75h-5.3zM417.5,468.02h2.5v1.75h-2.5zM420.7,468.02h5.5v1.75h-5.5zM427.0,468.02h3.9v1.75h-3.9zM431.8,468.02h4.7v1.75h-4.7zM437.1,468.02h0.9v1.75h-0.9zM379.3,471.02h5.7v1.75h-5.7zM385.7,471.02h4.0v1.75h-4.0zM390.4,471.02h4.1v1.75h-4.1zM395.1,471.02h4.8v1.75h-4.8zM400.6,471.02h3.4v1.75h-3.4zM404.6,471.02h4.3v1.75h-4.3zM409.6,471.02h6.2v1.75h-6.2zM416.3,471.02h6.2v1.75h-6.2zM423.1,471.02h4.7v1.75h-4.7zM428.4,471.02h4.7v1.75h-4.7zM433.9,471.02h4.1v1.75h-4.1zM379.3,474.02h3.9v1.75h-3.9zM383.8,474.02h3.8v1.75h-3.8zM388.2,474.02h5.3v1.75h-5.3zM394.3,474.02h2.6v1.75h-2.6zM397.5,474.02h6.5v1.75h-6.5zM404.7,474.02h2.6v1.75h-2.6zM407.8,474.02h2.4v1.75h-2.4zM410.8,474.02h6.6v1.75h-6.6zM418.1,474.02h5.4v1.75h-5.4zM424.2,474.02h6.6v1.75h-6.6zM431.5,474.02h5.2v1.75h-5.2zM437.4,474.02h0.6v1.75h-0.6zM379.3,477.12h5.5v1.75h-5.5zM385.4,477.12h5.5v1.75h-5.5zM391.4,477.12h5.9v1.75h-5.9zM397.8,477.12h3.2v1.75h-3.2zM401.5,477.12h6.0v1.75h-6.0zM408.3,477.12h5.4v1.75h-5.4zM414.3,477.12h6.2v1.75h-6.2zM421.2,477.12h5.0v1.75h-5.0zM426.7,477.12h3.8v1.75h-3.8zM431.1,477.12h3.9v1.75h-3.9zM435.5,477.12h2.5v1.75h-2.5zM379.3,480.12h2.7v1.75h-2.7zM382.6,480.12h2.6v1.75h-2.6zM385.7,480.12h6.1v1.75h-6.1zM392.5,480.12h6.6v1.75h-6.6zM399.7,480.12h2.5v1.75h-2.5zM402.7,480.12h5.1v1.75h-5.1zM408.6,480.12h6.9v1.75h-6.9zM416.2,480.12h4.3v1.75h-4.3zM420.9,480.12h5.4v1.75h-5.4zM426.8,480.12h3.1v1.75h-3.1zM430.4,480.12h2.4v1.75h-2.4zM433.5,480.12h3.0v1.75h-3.0zM437.2,480.12h0.8v1.75h-0.8zM379.3,483.12h3.0v1.75h-3.0zM382.7,483.12h5.7v1.75h-5.7zM389.0,483.12h5.8v1.75h-5.8zM395.3,483.12h2.6v1.75h-2.6zM398.6,483.12h5.7v1.75h-5.7zM405.1,483.12h5.8v1.75h-5.8zM411.3,483.12h5.3v1.75h-5.3zM417.3,483.12h4.5v1.75h-4.5zM422.6,483.12h3.6v1.75h-3.6zM426.9,483.12h5.7v1.75h-5.7zM433.1,483.12h2.5v1.75h-2.5zM436.2,483.12h1.8v1.75h-1.8zM379.3,486.12h3.8v1.75h-3.8zM383.8,486.12h3.2v1.75h-3.2zM387.8,486.12h4.6v1.75h-4.6zM392.9,486.12h4.1v1.75h-4.1zM397.6,486.12h4.4v1.75h-4.4zM402.7,486.12h3.1v1.75h-3.1zM406.5,486.12h4.1v1.75h-4.1zM411.2,486.12h5.3v1.75h-5.3zM417.1,486.12h4.2v1.75h-4.2zM422.0,486.12h6.7v1.75h-6.7zM429.5,486.12h5.0v1.75h-5.0zM435.1,486.12h2.7v1.75h-2.7z" fill="#111" opacity="0.86"/>
<path d="M422,429.45h16.0v1.7h-16.0zM379.3,432.45h12.7v1.7h-12.7zM406,432.45h32.0v1.7h-32.0zM379.3,435.45h32.7v1.7h-32.7zM425,435.45h13.0v1.7h-13.0zM379.3,438.45h7.7v1.7h-7.7zM408,453.05h30.0v1.7h-30.0zM379.3,456.05h6.7v1.7h-6.7zM390,462.05h48.0v1.7h-48.0zM379.3,465.05h6.7v1.7h-6.7zM410,477.15h28.0v1.7h-28.0zM379.3,480.15h6.7v1.7h-6.7zM399,486.15h33.0v1.7h-33.0z" fill="#2443b4" opacity="0.85"/>
<path d="M381.6,359.0h17.3v10.4h-17.3zM400.8,359.0h17.3v10.4h-17.3zM420.0,359.0h17.3v10.4h-17.3zM381.6,371.0h17.3v10.4h-17.3zM400.8,371.0h17.3v10.4h-17.3zM420.0,371.0h17.3v10.4h-17.3z" fill="#fff" stroke="#151515" stroke-width="1.4"/>
<path d="M387.0,360.5h7v0.7h-7zM406.2,360.5h7v0.7h-7zM425.4,360.5h7v0.7h-7zM387.0,372.5h7v0.7h-7zM406.2,372.5h7v0.7h-7zM425.4,372.5h7v0.7h-7z" fill="#888" opacity="0.6"/>
<path d="M382.8,367.7L391.1,367.5L394.1,366.6L397.2,360.4M402.0,367.7L410.3,367.5L413.3,366.6L416.4,360.4M421.2,367.7L429.5,367.5L432.5,366.6L435.6,360.4M382.8,379.7L391.1,379.5L394.1,378.6L397.2,372.4M402.0,379.7L410.3,379.5L413.3,378.6L416.4,372.4M421.2,379.7L429.5,379.5L432.5,378.6L435.6,372.4" fill="none" stroke="#2fae39" stroke-width="1.25"/>
<path d="M382.9,360.4h3.6v1.1h-3.6zM402.1,360.4h3.6v1.1h-3.6zM421.3,360.4h3.6v1.1h-3.6zM382.9,372.4h3.6v1.1h-3.6zM402.1,372.4h3.6v1.1h-3.6zM421.3,372.4h3.6v1.1h-3.6z" fill="#33b43d"/>
<path d="M376.2,492.1h1.1v1.3h-1.1z" fill="#444"/>
</g></svg>
<svg width="1200" height="804" viewBox="0 0 1200 804">
<g transform="translate(31.00,190.20) scale(1)"><path d="M-8.6,-9.1 h6.2 l1.1,-0.75 a1.9,1.9 0 0 1 3.1,0 l1.1,0.75 h6.2 v20 h-17.7 z" fill="#000"/><rect x="-7.3" y="-8.1" width="15.2" height="18.1" fill="#e9a66e"/><rect x="-6" y="-6.9" width="12.7" height="15.6" fill="#f7f7f7"/><path d="M-3.4,-6.1 l0.9,-1.9 h1.5 a1.3,1.3 0 0 1 2.5,0 h1.5 l0.9,1.9 z" fill="#d4d4d4"/><circle cx="0.25" cy="-7.7" r="0.5" fill="#e9a66e"/><rect x="-4.7" y="-5.8" width="9.9" height="1.1" fill="#a2a2a2"/><rect x="-4.4" y="-2.3" width="4.6" height="1.1" fill="#8a8a8a"/><rect x="-4.4" y="-0.5" width="8.4" height="1" fill="#c2c2c2"/><rect x="-4.4" y="1.75" width="9.6" height="1.2" fill="#474747"/><rect x="-4.4" y="3.8" width="8" height="1" fill="#c2c2c2"/><rect x="-4.4" y="5.55" width="2.7" height="1.1" fill="#474747"/></g>
<g transform="translate(31.00,241.85) scale(1)"><path d="M-8.75,-10.6 h13.9 l3.95,3.7 v18.05 h-17.85 z" fill="#000"/><path d="M-7.5,-9.1 h12.3 l3.45,3.2 v16.05 h-15.75 z" fill="#fbfbfb"/><path d="M4.8,-9.1 v3.2 h3.45 z" fill="#d4d4d4"/><rect x="-5.75" y="-7.80" width="5.75" height="0.95" fill="#cfcfcf"/><rect x="-5.75" y="-5.55" width="11.75" height="0.95" fill="#c4c4c4"/><rect x="-5.75" y="-2.80" width="10.75" height="0.95" fill="#b9b9b9"/><rect x="-5.75" y="-1.05" width="10.75" height="0.95" fill="#d2d2d2"/><rect x="-5.75" y="1.20" width="9.75" height="0.95" fill="#c4c4c4"/><rect x="-5.75" y="3.20" width="10.75" height="0.95" fill="#bdbdbd"/><rect x="-5.75" y="4.95" width="11.25" height="0.95" fill="#c9c9c9"/><rect x="-5.75" y="7.10" width="2.55" height="0.95" fill="#8f8f8f"/><path d="M4.3,1.55 l2.1,-2.4 h5.1 v4.8 h-5.1 z" fill="#000"/><path d="M5.3,1.55 l1.4,-1.6 h3.9 v3.2 h-3.9 z" fill="#ee0f9a"/><path d="M5.3,1.55 l1.4,-1.6 v3.2 z" fill="#f0433a"/></g>
<g transform="translate(31.00,293.50) scale(1)"><g stroke-linecap="round" stroke-linejoin="round"><polygon points="0.9,-3.1 3.4,-0.7 -6.9,9.4 -7.6,8.9 -7.5,6.7" fill="#000" stroke="#000" stroke-width="2.1"/><polygon points="2.1,-3.1 -0.4,-0.7 9.9,9.4 10.6,8.9 10.5,6.7" fill="#000" stroke="#000" stroke-width="2.1"/><circle cx="-3.75" cy="-6" r="2.6" stroke="#000" stroke-width="3.4" fill="#000"/><circle cx="7" cy="-6" r="2.6" stroke="#000" stroke-width="3.4" fill="#000"/><polygon points="2.1,-3.1 -0.4,-0.7 9.9,9.4 10.6,8.9 10.5,6.7" fill="#dedede"/><polygon points="0.9,-3.1 3.4,-0.7 -6.9,9.4 -7.6,8.9 -7.5,6.7" fill="#f6f6f6"/><path d="M-2,-4.1 L0.6,-2.1 M5.2,-4.1 L2.5,-2.1" stroke="#f03a2a" stroke-width="1.6" fill="none"/><circle cx="-3.75" cy="-6" r="2.6" stroke="#f03a2a" stroke-width="1.55" fill="none"/><circle cx="7" cy="-6" r="2.6" stroke="#f03a2a" stroke-width="1.55" fill="none"/></g></g>
<g transform="translate(31.00,345.15) scale(1)"><rect x="-4.3" y="-10.4" width="6.9" height="19" fill="#000"/><rect x="-3" y="-8.7" width="12.9" height="5.6" fill="#000"/><rect x="-3" y="-0.2" width="12.9" height="5.8" fill="#000"/><rect x="1" y="-5" width="5.2" height="6" fill="#000"/><rect x="-8.4" y="5.7" width="15.8" height="5" rx="1.5" fill="#000"/><path d="M-2.2,9 h4 l-2,2.4 z" fill="#000"/><rect x="-3.25" y="-9.4" width="4.75" height="17" fill="#dadada"/><rect x="-3.25" y="-3.2" width="4.75" height="0.8" fill="#bdbdbd"/><rect x="-3.25" y="-1.4" width="4.75" height="0.8" fill="#c6c6c6"/><rect x="1.5" y="-7.65" width="7.3" height="1.9" fill="#f2f2f2"/><rect x="6.6" y="-8" width="1.7" height="4.1" fill="#fff"/><rect x="1.5" y="1.8" width="7.3" height="1.9" fill="#f2f2f2"/><rect x="6.6" y="0.7" width="1.7" height="4.1" fill="#fff"/><rect x="-7.2" y="6.9" width="13.4" height="2.6" fill="#ececec"/><path d="M-2,8.6 h3.6 l-1.8,2 z" fill="#d8d8d8"/><circle cx="-6.1" cy="8.2" r="1.35" fill="#f23a1d"/><circle cx="5.1" cy="8.2" r="1.35" fill="#f23a1d"/></g>
<g transform="translate(31.00,396.80) scale(1)"><path d="M-6.95,1 V-2.5 a7.45,7.45 0 0 1 14.9,0 V1 z" fill="#000"/><path d="M-5.2,1 V-2.5 a5.7,5.7 0 0 1 11.4,0 V1" fill="none" stroke="#dadfe6" stroke-width="1.6"/><rect x="-8.3" y="-1.1" width="17.6" height="12.6" rx="1.3" fill="#000"/><rect x="-7.25" y="-0.05" width="15.5" height="10.5" rx="0.4" fill="#ffc83d"/></g>
<g transform="translate(31.00,448.45) scale(1)"><path d="M3.6,1.7 L10.7,7.9" stroke="#000" stroke-width="5.4" stroke-linecap="round" fill="none"/><circle cx="-1.25" cy="-3.2" r="7.6" fill="#000"/><path d="M4.3,2.3 L10.5,7.7" stroke="#8d929a" stroke-width="3.1" stroke-linecap="round" fill="none"/><path d="M4.6,1.9 L10.7,7.2" stroke="#b6bac0" stroke-width="0.9" stroke-linecap="round" fill="none"/><circle cx="-1.25" cy="-3.2" r="6.55" fill="#e6ebf0"/><circle cx="-1.25" cy="-3.2" r="5.75" fill="#93c2f3"/><path d="M-5.32,0.87 A5.75,5.75 0 0 1 2.82,-7.27 z" fill="#b9daf9"/></g>
<g transform="translate(31.00,500.10) scale(1)"><path d="M-1.7,-7.5 C-2.6,-5.6 -7.45,0.7 -7.45,4.45 a5.8,5.8 0 0 0 11.6,0 C4.15,0.7 -0.8,-5.6 -1.7,-7.5 z" fill="#000" stroke="#000" stroke-width="2.3" stroke-linejoin="round"/><path d="M-1.7,-7.5 C-2.6,-5.6 -7.45,0.7 -7.45,4.45 a5.8,5.8 0 0 0 11.6,0 C4.15,0.7 -0.8,-5.6 -1.7,-7.5 z" fill="#05b6f7"/></g>
<g transform="translate(31.00,551.75) scale(1)"><path d="M-8.75,-10.5 h13.9 l3.95,3.7 v18.05 h-17.85 z" fill="#000"/><path d="M-7.5,-9 h12.3 l3.45,3.2 v16.05 h-15.75 z" fill="#fbfbfb"/><path d="M4.8,-9 v3.2 h3.45 z" fill="#d4d4d4"/><g transform="translate(0,0.1)"><rect x="-5.75" y="-7.80" width="5.75" height="0.95" fill="#cfcfcf"/><rect x="-5.75" y="-5.55" width="11.75" height="0.95" fill="#c4c4c4"/><rect x="-5.75" y="-2.80" width="10.75" height="0.95" fill="#b9b9b9"/><rect x="-5.75" y="-1.05" width="10.75" height="0.95" fill="#d2d2d2"/><rect x="-5.75" y="1.20" width="9.75" height="0.95" fill="#c4c4c4"/><rect x="-5.75" y="3.20" width="10.75" height="0.95" fill="#bdbdbd"/><rect x="-5.75" y="4.95" width="11.25" height="0.95" fill="#c9c9c9"/><rect x="-5.75" y="7.10" width="2.55" height="0.95" fill="#8f8f8f"/></g><g transform="translate(-2.2,6.9) rotate(-43.9)"><path d="M-0.91,0 L3.8,-1.80 H18.25 a1.80,1.80 0 0 1 0,3.60 H3.8 z" fill="#000"/><path d="M0,0 L3.9,-1.15 V1.15 z" fill="#f3e3c3"/><path d="M0,0 L1.5,-0.46 V0.46 z" fill="#5a4a3a"/><rect x="3.8" y="-1.15" width="9.50" height="2.3" fill="#ffc51c"/><rect x="3.8" y="0.34" width="9.50" height="0.80" fill="#f3a900"/><rect x="13.30" y="-1.15" width="2.9" height="2.3" fill="#e4e4e4"/><rect x="13.30" y="0.34" width="2.9" height="0.80" fill="#c9c9c9"/><path d="M16.20,-1.15 H18.25 a1.15,1.15 0 0 1 0,2.3 H16.20 z" fill="#f2453b"/></g></g>
<g transform="translate(31.00,603.40) scale(1)"><g transform="translate(-7,9.6) rotate(-45.4)"><path d="M-1.40,0 L3.8,-3.25 H23.35 a3.25,3.25 0 0 1 0,6.50 H3.8 z" fill="#000"/><path d="M0,0 L3.9,-2.25 V2.25 z" fill="#f3e3c3"/><path d="M0,0 L1.5,-0.90 V0.90 z" fill="#5a4a3a"/><rect x="3.8" y="-2.25" width="15.70" height="4.5" fill="#ffc51c"/><rect x="3.8" y="0.67" width="15.70" height="1.57" fill="#f3a900"/><rect x="19.50" y="-2.25" width="2.9" height="4.5" fill="#e4e4e4"/><rect x="19.50" y="0.67" width="2.9" height="1.57" fill="#c9c9c9"/><path d="M22.40,-2.25 H23.35 a2.25,2.25 0 0 1 0,4.5 H22.40 z" fill="#f2453b"/></g></g>
<g transform="translate(31.00,655.05) scale(1)"><path d="M-8.6,-9.1 h6.2 l1.1,-0.75 a1.9,1.9 0 0 1 3.1,0 l1.1,0.75 h6.2 v20 h-17.7 z" fill="#000"/><rect x="-7.3" y="-8.1" width="15.2" height="18.1" fill="#e9a66e"/><rect x="-6" y="-6.9" width="12.7" height="15.6" fill="#f7f7f7"/><path d="M-3.4,-6.1 l0.9,-1.9 h1.5 a1.3,1.3 0 0 1 2.5,0 h1.5 l0.9,1.9 z" fill="#d4d4d4"/><circle cx="0.25" cy="-7.7" r="0.5" fill="#e9a66e"/><rect x="-4.7" y="-5.8" width="9.9" height="1.1" fill="#a2a2a2"/><rect x="-4.4" y="-2.3" width="4.6" height="1.1" fill="#8a8a8a"/><rect x="-4.4" y="-0.5" width="8.4" height="1" fill="#c2c2c2"/><rect x="-4.4" y="1.75" width="9.6" height="1.2" fill="#474747"/><rect x="-4.4" y="3.8" width="8" height="1" fill="#c2c2c2"/><rect x="-4.4" y="5.55" width="2.7" height="1.1" fill="#474747"/></g>
<g transform="translate(31.00,706.70) scale(1)"><rect x="-8.8" y="-10.95" width="22.1" height="22.1" rx="1" fill="#000"/><rect x="-7.25" y="-9.2" width="19.3" height="19.3" fill="#0a7ad9"/><path d="M-2.54,-1.33 A5.2,5.2 0 0 1 7.53,-0.00" fill="none" stroke="#fff" stroke-width="1.5"/><path d="M7.24,2.23 A5.2,5.2 0 0 1 -2.83,0.90" fill="none" stroke="#fff" stroke-width="1.5"/><path d="M-4.2,-4.7 V-0.6 H0 z" fill="#fff"/><path d="M8.9,5.6 V1.5 H4.7 z" fill="#fff"/></g>
<g transform="translate(31.00,758.35) scale(1)"><defs><pattern id="mesh" width="2.9" height="2.9" patternUnits="userSpaceOnUse" patternTransform="rotate(45 2 0)"><rect x="0.4" y="0.4" width="1.95" height="1.95" fill="#111"/></pattern><clipPath id="tb"><path d="M-6.6,-6.6 L-4.6,8.3 Q2.3,11 9.2,8.3 L11.2,-6.6 z"/></clipPath></defs><path d="M-7.9,-7.2 a10.2,3.5 0 0 1 20.4,0 L10.3,9.2 Q2.3,12.6 -5.7,9.2 z" fill="#000"/><path d="M-6.6,-6.6 L-4.6,8.3 Q2.3,11 9.2,8.3 L11.2,-6.6 z" fill="#bcc2cb"/><rect x="-8" y="-8" width="21" height="20" fill="url(#mesh)" clip-path="url(#tb)"/><ellipse cx="2.3" cy="-7" rx="9.2" ry="2.5" fill="#cdd2d9"/><ellipse cx="2.3" cy="-6.8" rx="7.6" ry="1.5" fill="#8e949e"/><ellipse cx="2.3" cy="-6.8" rx="7.6" ry="1.5" fill="url(#mesh)" opacity="0.6"/></g>
<g transform="translate(31.00,810.00) scale(1)"><path d="M-8.75,-10.6 h13.9 l3.95,3.7 v18.05 h-17.85 z" fill="#000"/><path d="M-7.5,-9.1 h12.3 l3.45,3.2 v16.05 h-15.75 z" fill="#fbfbfb"/><path d="M4.8,-9.1 v3.2 h3.45 z" fill="#d4d4d4"/><rect x="-5.75" y="-7.80" width="5.75" height="0.95" fill="#cfcfcf"/><rect x="-5.75" y="-5.55" width="11.75" height="0.95" fill="#c4c4c4"/><rect x="-5.75" y="-2.80" width="10.75" height="0.95" fill="#b9b9b9"/><rect x="-5.75" y="-1.05" width="10.75" height="0.95" fill="#d2d2d2"/><rect x="-5.75" y="1.20" width="9.75" height="0.95" fill="#c4c4c4"/><rect x="-5.75" y="3.20" width="10.75" height="0.95" fill="#bdbdbd"/><rect x="-5.75" y="4.95" width="11.25" height="0.95" fill="#c9c9c9"/><rect x="-5.75" y="7.10" width="2.55" height="0.95" fill="#8f8f8f"/></g>
<path d="M289,80.4 h16.4 v4.6 h1.3 v3.4 h-1.6 v3.3 h2 v6.2 h-16.5 q-2.4,-0.2 -2.4,-3 q0,-1.6 1.2,-2.4 q-1.2,-0.9 -1.2,-2.1 q0,-1.5 1.4,-2 q0.6,-0.3 0.6,-1 z" fill="#000"/><rect x="289.8" y="81.6" width="3.9" height="3.4" fill="#16c60c"/><rect x="293.7" y="81.9" width="10.8" height="2.9" fill="#fbfbfb"/><rect x="290.7" y="85.4" width="15" height="2.8" fill="#c98a3c"/><rect x="290.7" y="85.4" width="3.4" height="2.7" fill="#fcb900"/><rect x="294.1" y="85.9" width="11" height="1.9" fill="#fbfbfb"/><path d="M290.6,88.5 h1.6 v3 h-1.6 a1.5,1.5 0 0 1 0,-3 z" fill="#2e8fea"/><rect x="292.2" y="88.6" width="11.7" height="2.8" fill="#fbfbfb"/><path d="M291.4,92.2 h14.6 v4.8 h-14.6 a2.4,2.4 0 0 1 0,-4.8 z" fill="#c97a2a"/><path d="M291.4,92.2 h3.2 v4.8 h-3.2 a2.4,2.4 0 0 1 0,-4.8 z" fill="#f7630c"/><path d="M294.4,93.2 h11 v2.9 h-11 a1.45,1.45 0 0 1 0,-2.9 z" fill="#fbfbfb"/>
<g transform="translate(440.15,88.10) scale(0.93)"><path d="M-8.6,-9.1 h6.2 l1.1,-0.75 a1.9,1.9 0 0 1 3.1,0 l1.1,0.75 h6.2 v20 h-17.7 z" fill="#000"/><rect x="-7.3" y="-8.1" width="15.2" height="18.1" fill="#e9a66e"/><rect x="-6" y="-6.9" width="12.7" height="15.6" fill="#f7f7f7"/><path d="M-3.4,-6.1 l0.9,-1.9 h1.5 a1.3,1.3 0 0 1 2.5,0 h1.5 l0.9,1.9 z" fill="#d4d4d4"/><circle cx="0.25" cy="-7.7" r="0.5" fill="#e9a66e"/><rect x="-4.7" y="-5.8" width="9.9" height="1.1" fill="#a2a2a2"/><rect x="-4.4" y="-2.3" width="4.6" height="1.1" fill="#8a8a8a"/><rect x="-4.4" y="-0.5" width="8.4" height="1" fill="#c2c2c2"/><rect x="-4.4" y="1.75" width="9.6" height="1.2" fill="#474747"/><rect x="-4.4" y="3.8" width="8" height="1" fill="#c2c2c2"/><rect x="-4.4" y="5.55" width="2.7" height="1.1" fill="#474747"/></g>
<g transform="translate(585.25,88.30) scale(0.93)"><g transform="translate(-7,9.6) rotate(-45.4)"><path d="M-1.40,0 L3.8,-3.25 H23.35 a3.25,3.25 0 0 1 0,6.50 H3.8 z" fill="#000"/><path d="M0,0 L3.9,-2.25 V2.25 z" fill="#f3e3c3"/><path d="M0,0 L1.5,-0.90 V0.90 z" fill="#5a4a3a"/><rect x="3.8" y="-2.25" width="15.70" height="4.5" fill="#ffc51c"/><rect x="3.8" y="0.67" width="15.70" height="1.57" fill="#f3a900"/><rect x="19.50" y="-2.25" width="2.9" height="4.5" fill="#e4e4e4"/><rect x="19.50" y="0.67" width="2.9" height="1.57" fill="#c9c9c9"/><path d="M22.40,-2.25 H23.35 a2.25,2.25 0 0 1 0,4.5 H22.40 z" fill="#f2453b"/></g></g>
<g transform="translate(700.50,87.80) scale(0.93)"><path d="M-6.95,1 V-2.5 a7.45,7.45 0 0 1 14.9,0 V1 z" fill="#000"/><path d="M-5.2,1 V-2.5 a5.7,5.7 0 0 1 11.4,0 V1" fill="none" stroke="#dadfe6" stroke-width="1.6"/><rect x="-8.3" y="-1.1" width="17.6" height="12.6" rx="1.3" fill="#000"/><rect x="-7.25" y="-0.05" width="15.5" height="10.5" rx="0.4" fill="#ffc83d"/></g>
<g transform="translate(841.50,88.05) scale(0.93)"><rect x="-8.8" y="-10.95" width="22.1" height="22.1" rx="1" fill="#000"/><rect x="-7.25" y="-9.2" width="19.3" height="19.3" fill="#0a7ad9"/><path d="M-2.54,-1.33 A5.2,5.2 0 0 1 7.53,-0.00" fill="none" stroke="#fff" stroke-width="1.5"/><path d="M7.24,2.23 A5.2,5.2 0 0 1 -2.83,0.90" fill="none" stroke="#fff" stroke-width="1.5"/><path d="M-4.2,-4.7 V-0.6 H0 z" fill="#fff"/><path d="M8.9,5.6 V1.5 H4.7 z" fill="#fff"/></g>
<ellipse cx="999.6" cy="35.8" rx="10.45" ry="5.05" fill="#000"/><ellipse cx="1006.7" cy="29.3" rx="1.55" ry="2.1" fill="none" stroke="#000" stroke-width="3.1"/><path d="M993.3,28.3 C993.3,33 995.8,35.7 999.25,35.7 C1002.7,35.7 1005.2,33 1005.2,28.3 z" fill="#000" stroke="#000" stroke-width="2"/><ellipse cx="999.25" cy="28.3" rx="5.95" ry="2.2" fill="#000" stroke="#000" stroke-width="2"/><path d="M994.3,27.8 l0.8,-4.7 l1.6,2.1 l1.8,-2.7 l1.6,2.5 l1.9,-2.2 l1.2,2.6 l1.2,2.4 z" fill="#000" stroke="#000" stroke-width="1.9" stroke-linejoin="round"/><ellipse cx="999.6" cy="35.8" rx="9.45" ry="4.05" fill="#f4f4f4"/><ellipse cx="999.6" cy="36.7" rx="6.8" ry="2.4" fill="#dadada"/><ellipse cx="1006.7" cy="29.3" rx="1.55" ry="2.1" fill="#000" stroke="#f6f6f6" stroke-width="1.2"/><path d="M993.3,28.3 C993.3,33 995.8,35.7 999.25,35.7 C1002.7,35.7 1005.2,33 1005.2,28.3 z" fill="#f7f7f7"/><ellipse cx="999.25" cy="28.3" rx="5.95" ry="2.2" fill="#fbfbfb"/><path d="M994.3,27.8 l0.8,-4.7 l1.6,2.1 l1.8,-2.7 l1.6,2.5 l1.9,-2.2 l1.2,2.6 l1.2,2.4 z" fill="#fff"/><ellipse cx="999.25" cy="28.6" rx="4.8" ry="1.5" fill="#8a4a14"/><ellipse cx="999.4" cy="28.9" rx="3.1" ry="0.9" fill="#c98a32"/>
<polygon points="1165.30,24.80 1167.84,21.53 1168.40,25.63 1172.23,24.07 1170.67,27.90 1174.77,28.46 1171.50,31.00 1174.77,33.54 1170.67,34.10 1172.23,37.93 1168.40,36.37 1167.84,40.47 1165.30,37.20 1162.76,40.47 1162.20,36.37 1158.37,37.93 1159.93,34.10 1155.83,33.54 1159.10,31.00 1155.83,28.46 1159.93,27.90 1158.37,24.07 1162.20,25.63 1162.76,21.53" fill="#000" stroke="#000" stroke-width="1.9" stroke-linejoin="round"/><polygon points="1165.30,24.80 1167.84,21.53 1168.40,25.63 1172.23,24.07 1170.67,27.90 1174.77,28.46 1171.50,31.00 1174.77,33.54 1170.67,34.10 1172.23,37.93 1168.40,36.37 1167.84,40.47 1165.30,37.20 1162.76,40.47 1162.20,36.37 1158.37,37.93 1159.93,34.10 1155.83,33.54 1159.10,31.00 1155.83,28.46 1159.93,27.90 1158.37,24.07 1162.20,25.63 1162.76,21.53" fill="#ffc40e"/><circle cx="1165.3" cy="31.0" r="6" fill="#ffdb00"/>
<path d="M443.92,701.18 A9.45,9.45 0 1 1 430.47,702.00" fill="none" stroke="#fff" stroke-width="2.05"/><polygon points="434.8,698.8 425.8,699.0 431.6,702.2 434.55,707.3" fill="#fff"/><path d="M1003.09,701.14 A9.35,9.35 0 1 0 1016.16,702.17" fill="none" stroke="#fff" stroke-width="2.05"/><polygon points="1012.0,699.2 1021.0,699.3 1015.2,702.5 1012.2,707.3" fill="#fff"/><g fill="none" stroke="#fff"><path d="M717.7,696.6 V718.8" stroke-width="2.3"/><path d="M712.5,701.1 L717.7,696.4 L722.9,701.1" stroke-width="2"/><path d="M729.3,695.1 V717.4" stroke-width="2.3"/><path d="M724.1,712.7 L729.3,717.4 L734.5,712.7" stroke-width="2"/></g>
<rect x="18.4" y="23" width="17.2" height="2.4" fill="#fff"/><rect x="18.4" y="30" width="17.2" height="2.4" fill="#fff"/><rect x="18.4" y="37" width="17.2" height="2.4" fill="#fff"/>
<path d="M233.8,793.9 L237.6,798.9 L241.5,793.9" fill="none" stroke="#9a9da3" stroke-width="1.4"/>
</svg>
<span class="t" id="logo" style="left:57.85px;top:17.80px;font-size:20.2px;line-height:27px;letter-spacing:-0.703px;color:#4ecdd0;font-weight:700;background:linear-gradient(90deg,#4ecdd0 0%,#4ecdd0 52%,#6f97f2 80%,#7d8af8 100%);-webkit-background-clip:text;background-clip:text;color:transparent;-webkit-text-fill-color:transparent;">LocalPDF</span>
<span class="t" id="buy" style="left:1018.81px;top:22.40px;font-size:14.53px;line-height:19px;letter-spacing:-0.022px;color:#fff;font-weight:400;-webkit-text-stroke:0.2px #fff;">Buy me a coffee</span>
<span class="t" id="tab0" style="left:316.37px;top:79.21px;font-size:14.53px;line-height:19px;letter-spacing:-0.005px;color:#62a6f8;-webkit-text-stroke:0.15px #62a6f8;">All Tools</span>
<span class="t" id="tab1" style="left:457.31px;top:79.21px;font-size:14.53px;line-height:19px;letter-spacing:-0.010px;color:#a0a7b4;-webkit-text-stroke:0.12px #a0a7b4;">Organize</span>
<span class="t" id="tab2" style="left:605.71px;top:79.21px;font-size:14.53px;line-height:19px;letter-spacing:0.128px;color:#a0a7b4;-webkit-text-stroke:0.12px #a0a7b4;">Edit</span>
<span class="t" id="tab3" style="left:717.84px;top:79.21px;font-size:14.53px;line-height:19px;letter-spacing:0.207px;color:#a0a7b4;-webkit-text-stroke:0.12px #a0a7b4;">Security</span>
<span class="t" id="tab4" style="left:862.76px;top:79.21px;font-size:14.53px;line-height:19px;letter-spacing:0.086px;color:#a0a7b4;-webkit-text-stroke:0.12px #a0a7b4;">Convert</span>
<span class="t" id="tools" style="left:16.24px;top:128.00px;font-size:14.53px;line-height:19px;letter-spacing:-0.851px;color:#adb0b8;font-weight:700;">TOOLS</span>
<span class="t" id="s0" style="left:54.28px;top:182.00px;font-size:14.1px;line-height:19px;letter-spacing:-0.019px;color:#e2e6ec;-webkit-text-stroke:0.22px #e2e6ec;">Organize Pages</span>
<span class="t" id="s1" style="left:56.34px;top:233.65px;font-size:14.1px;line-height:19px;letter-spacing:-0.086px;color:#e2e6ec;-webkit-text-stroke:0.22px #e2e6ec;">Merge PDF</span>
<span class="t" id="s2" style="left:57.76px;top:285.30px;font-size:14.1px;line-height:19px;letter-spacing:-0.235px;color:#e2e6ec;-webkit-text-stroke:0.22px #e2e6ec;">Split PDF</span>
<span class="t" id="s3" style="left:55.73px;top:336.96px;font-size:14.1px;line-height:19px;letter-spacing:-0.127px;color:#e2e6ec;-webkit-text-stroke:0.22px #e2e6ec;">Compress PDF</span>
<span class="t" id="s4" style="left:53.79px;top:388.60px;font-size:14.1px;line-height:19px;letter-spacing:-0.059px;color:#e2e6ec;-webkit-text-stroke:0.22px #e2e6ec;">Protect PDF</span>
<span class="t" id="s5" style="left:58.33px;top:440.25px;font-size:14.1px;line-height:19px;letter-spacing:-0.882px;color:#e2e6ec;-webkit-text-stroke:0.22px #e2e6ec;">OCR PDF</span>
<span class="t" id="s6" style="left:50.84px;top:491.90px;font-size:14.1px;line-height:19px;letter-spacing:-0.073px;color:#e2e6ec;-webkit-text-stroke:0.22px #e2e6ec;">Watermark PDF</span>
<span class="t" id="s7" style="left:58.97px;top:543.55px;font-size:14.1px;line-height:19px;letter-spacing:-0.026px;color:#e2e6ec;-webkit-text-stroke:0.22px #e2e6ec;">Add Text to PDF</span>
<span class="t" id="s8" style="left:57.84px;top:595.21px;font-size:14.1px;line-height:19px;letter-spacing:-0.012px;color:#e2e6ec;-webkit-text-stroke:0.22px #e2e6ec;">Edit Text in PDF</span>
<span class="t" id="s9" style="left:54.92px;top:646.85px;font-size:14.1px;line-height:19px;letter-spacing:-0.015px;color:#e2e6ec;-webkit-text-stroke:0.22px #e2e6ec;">Add Form Fields</span>
<span class="t" id="s10" style="left:58.04px;top:698.50px;font-size:14.1px;line-height:19px;letter-spacing:-0.302px;color:#62a6f8;-webkit-text-stroke:0.22px #62a6f8;">Rotate PDF</span>
<span class="t" id="s11" style="left:57.74px;top:750.15px;font-size:14.1px;line-height:19px;letter-spacing:0.013px;color:#e2e6ec;-webkit-text-stroke:0.22px #e2e6ec;">Delete Pages</span>
<span class="t" id="h1" style="left:277.01px;top:143.60px;font-size:29.8px;line-height:39px;letter-spacing:-0.557px;color:#fff;font-weight:700;">Rotate PDF</span>
<span class="t" id="sub" style="left:277.39px;top:189.75px;font-size:15.99px;line-height:21px;letter-spacing:-0.087px;color:#9ca3af;">Rotate PDF pages</span>
<span class="t" id="fp" style="left:300.89px;top:260.00px;font-size:20.35px;line-height:27px;letter-spacing:-0.400px;color:#fff;font-weight:700;">File preview</span>
<span class="t" id="fname" style="left:478.97px;top:303.75px;font-size:18.31px;line-height:24px;letter-spacing:-0.116px;color:#fff;font-weight:700;">liang24b.pdf</span>
<span class="t" id="tp" style="left:478.92px;top:337.25px;font-size:14.61px;line-height:19px;letter-spacing:0.045px;color:#9ca3af;">Total pages: 46</span>
<span class="t" id="fs" style="left:479.05px;top:364.00px;font-size:14.61px;line-height:19px;letter-spacing:-0.610px;color:#9ca3af;">File size: 1.1 MB</span>
<span class="t" id="cf" style="left:494.26px;top:408.71px;font-size:14.61px;line-height:19px;letter-spacing:-0.073px;color:#ee4a3f;-webkit-text-stroke:0.15px #ee4a3f;">Change file</span>
<span class="t" id="rs" style="left:301.39px;top:584.80px;font-size:20.35px;line-height:27px;letter-spacing:-0.559px;color:#fff;font-weight:700;">Rotation settings</span>
<span class="t" id="sra" style="left:301.51px;top:627.10px;font-size:16.28px;line-height:22px;letter-spacing:0.133px;color:#f3f4f6;-webkit-text-stroke:0.2px #f3f4f6;">Select rotation angle</span>
<span class="t" id="o1a" style="left:425.07px;top:740.00px;font-size:15.26px;line-height:20px;letter-spacing:0.511px;color:#fff;font-weight:700;">90°</span>
<span class="t" id="o1b" style="left:403.85px;top:766.75px;font-size:14.68px;line-height:20px;letter-spacing:0.056px;color:#9ca3af;">Clockwise</span>
<span class="t" id="o2a" style="left:709.04px;top:740.00px;font-size:15.26px;line-height:20px;letter-spacing:-0.910px;color:#fff;font-weight:700;">180°</span>
<span class="t" id="o2b" style="left:681.17px;top:766.75px;font-size:14.68px;line-height:20px;letter-spacing:-0.034px;color:#9ca3af;">Upside down</span>
<span class="t" id="o3a" style="left:994.47px;top:740.00px;font-size:15.26px;line-height:20px;letter-spacing:-0.021px;color:#fff;font-weight:700;">270°</span>
<span class="t" id="o3b" style="left:948.75px;top:766.75px;font-size:14.68px;line-height:20px;letter-spacing:0.145px;color:#9ca3af;">Counter-clockwise</span>
</div></body></html>
